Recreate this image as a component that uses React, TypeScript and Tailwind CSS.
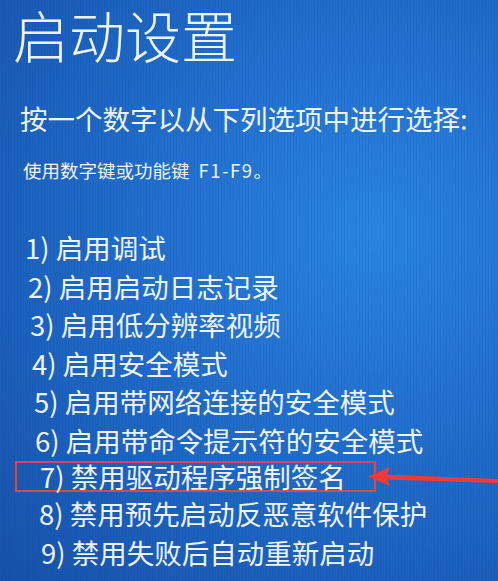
import React from 'react';

const items = [
    { label: '1) 启用调试', cls: 'pl-[25px]' },
    { label: '2) 启用启动日志记录', cls: 'pl-[28px]' },
    { label: '3) 启用低分辨率视频', cls: 'pl-[30px]' },
    { label: '4) 启用安全模式', cls: 'pl-[32px]' },
    { label: '5) 启用带网络连接的安全模式', cls: 'pl-[34px]' },
    { label: '6) 启用带命令提示符的安全模式', cls: 'pl-[35px]' },
    { label: '7) 禁用驱动程序强制签名', cls: 'pl-[38px]', marked: true },
    { label: '8) 禁用预先启动反恶意软件保护', cls: 'pl-[39px]' },
    { label: '9) 禁用失败后自动重新启动', cls: 'pl-[41px]' },
];

const App = () => {
    return (
        <div
            className="relative w-[498px] h-[581px] overflow-hidden text-[#eef4ff] bg-[radial-gradient(ellipse_at_75%_40%,#2a86df_0%,#2372cf_35%,#1c60bd_70%,#1751a8_100%)]"
            style={{ fontFamily: '"Noto Sans CJK SC", "Noto Sans", sans-serif' }}
        >
            {/* scanline texture */}
            <div className="absolute inset-0 pointer-events-none opacity-20 bg-[repeating-linear-gradient(90deg,transparent_0px,transparent_2px,#0b3f8a_3px)]" />

            <div className="relative flex flex-col">
                {/* Title */}
                <h1 className="pl-[13px] pt-[2px] text-[56px] leading-[64px] font-light">启动设置</h1>

                {/* Subtitle */}
                <p className="mt-[32px] pl-[20px] text-[27.5px] leading-[40px]">按一个数字以从下列选项中进行选择:</p>

                {/* Hint */}
                <p className="mt-[19px] pl-[23px] text-[18.5px] leading-[26px]">
                    使用数字键或功能键<span className="ml-[9px] tracking-[1.5px]">F1-F9</span>。
                </p>

                {/* Options */}
                <ul className="mt-[45px] flex flex-col text-[27.5px]">
                    {items.map((item) =>
                        item.marked ? (
                            <li key={item.label} className="mt-[2px] mb-[2px] flex">
                                <div className="ml-[15px] w-[361px] h-[31px] border-2 border-[#e2463f] leading-[26px] pl-[23px] whitespace-nowrap">
                                    {item.label}
                                </div>
                            </li>
                        ) : (
                            <li key={item.label} className={`${item.cls} leading-[38.5px] whitespace-nowrap`}>
                                {item.label}
                            </li>
                        )
                    )}
                </ul>
            </div>

            {/* Arrow annotation */}
            <svg className="absolute left-0 top-0 pointer-events-none" width="498" height="581" viewBox="0 0 498 581">
                <path d="M384 474.5 L498 479 L498 483 L384 479.5 Z" fill="#f03a36" />
                <path d="M368 476.5 L390 467 L386 477 L390 486 Z" fill="#f03a36" />
            </svg>
        </div>
    );
};

export default App;
